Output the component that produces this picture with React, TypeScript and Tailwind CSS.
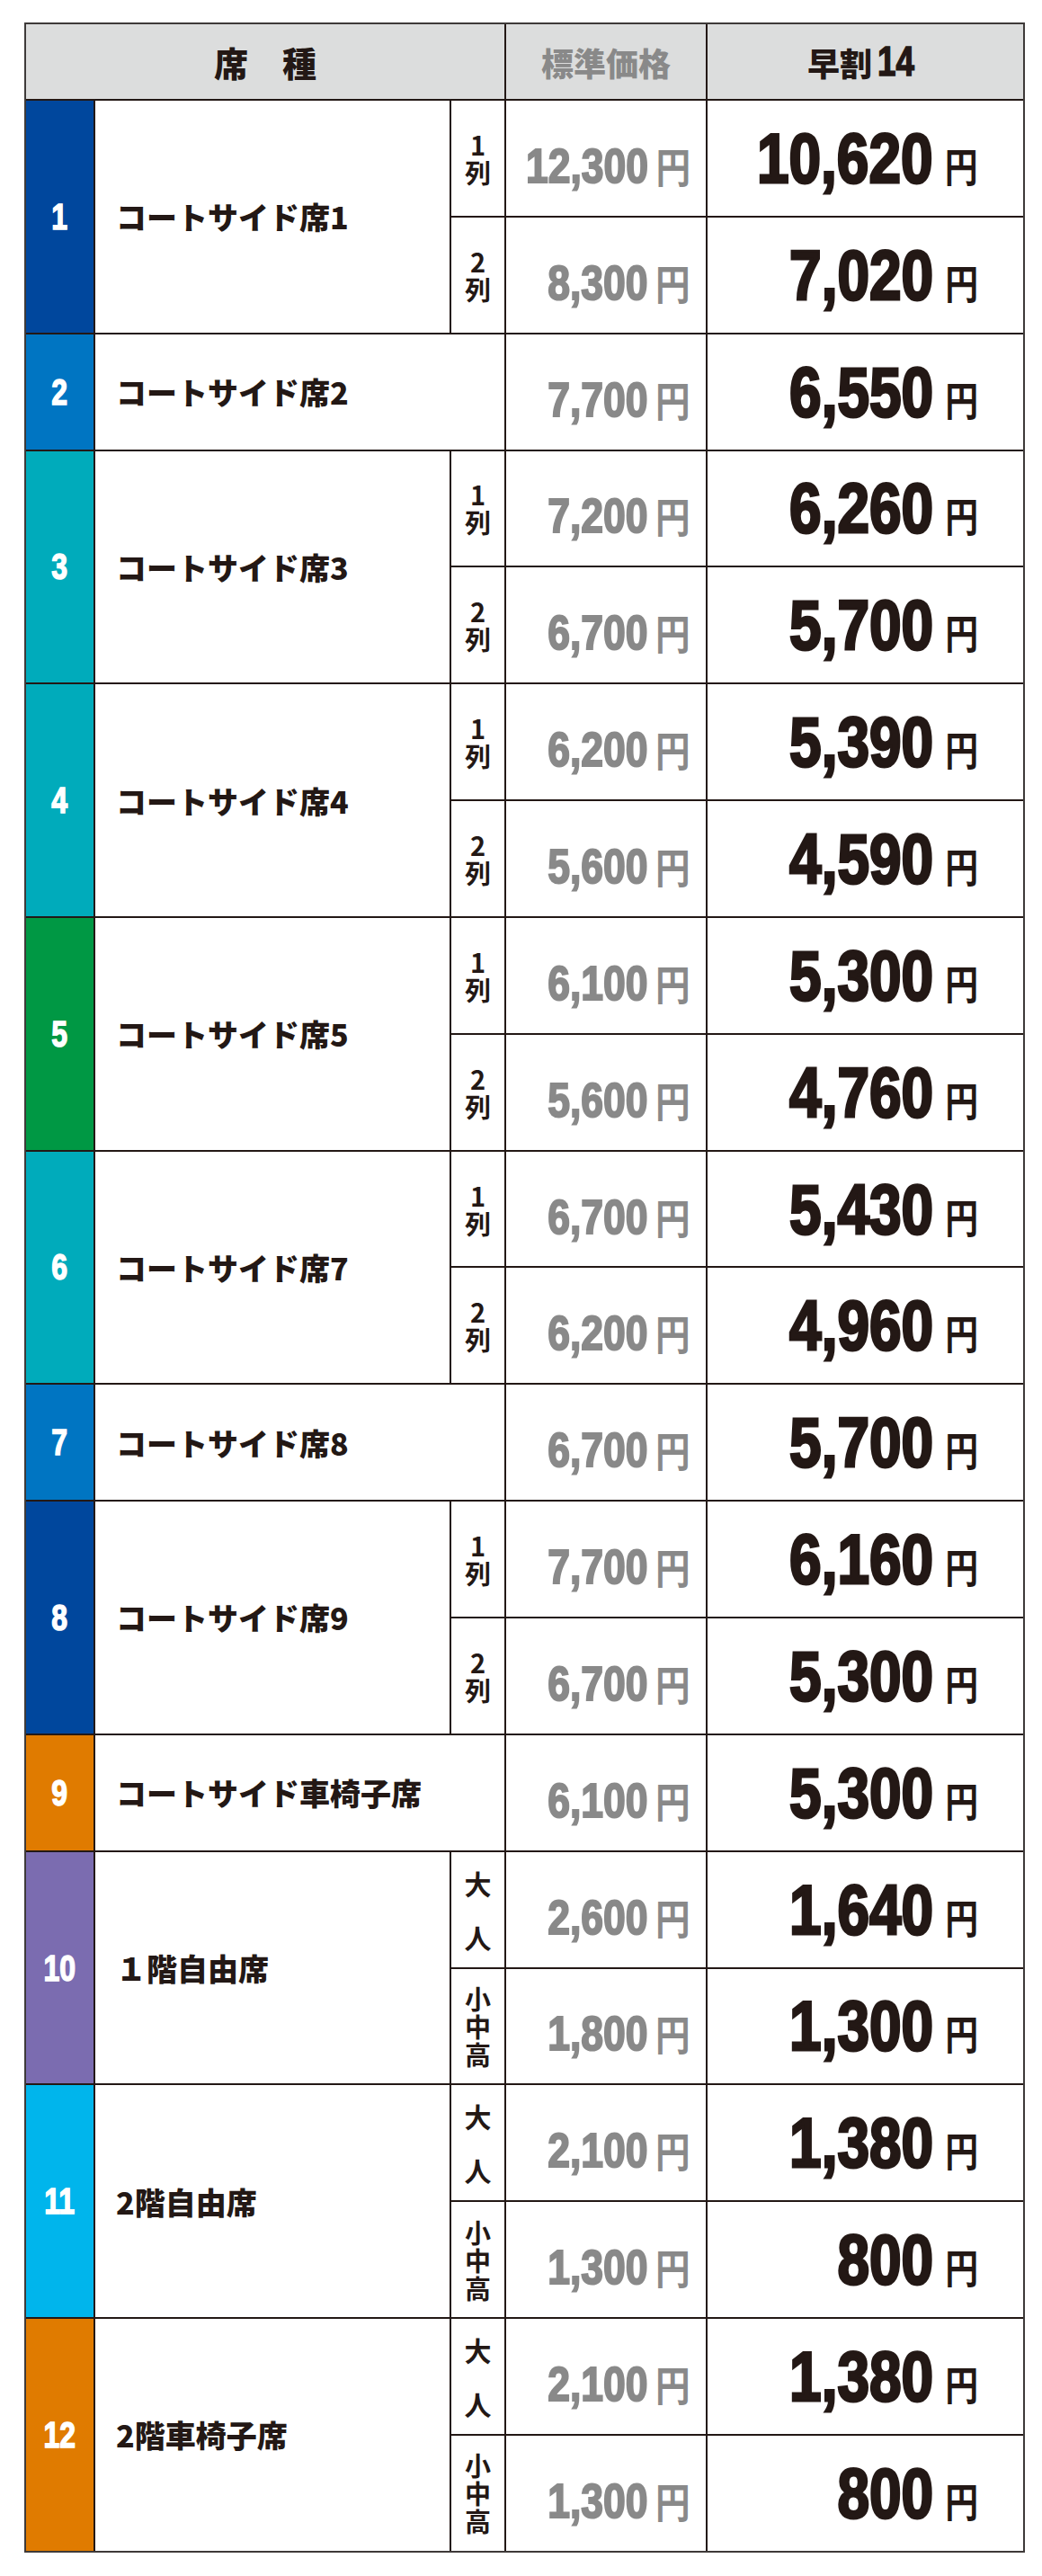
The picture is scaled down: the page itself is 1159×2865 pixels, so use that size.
import React from "react";

const jp = "font-['Noto_Sans_CJK_JP','Noto_Sans_CJK_SC',sans-serif]";
const num = "font-['Liberation_Sans','Arial',sans-serif]";

type Sub = { label: string; std: string; early: string };
type Seat = {
  n: string;
  color: string;
  name: string;
  subs?: Sub[];
  std?: string;
  early?: string;
};

const seats: Seat[] = [
  {
    n: "1",
    color: "bg-[#00479d]",
    name: "コートサイド席1",
    subs: [
      { label: "1列", std: "12,300", early: "10,620" },
      { label: "2列", std: "8,300", early: "7,020" },
    ],
  },
  { n: "2", color: "bg-[#0075c2]", name: "コートサイド席2", std: "7,700", early: "6,550" },
  {
    n: "3",
    color: "bg-[#00abbb]",
    name: "コートサイド席3",
    subs: [
      { label: "1列", std: "7,200", early: "6,260" },
      { label: "2列", std: "6,700", early: "5,700" },
    ],
  },
  {
    n: "4",
    color: "bg-[#00abbb]",
    name: "コートサイド席4",
    subs: [
      { label: "1列", std: "6,200", early: "5,390" },
      { label: "2列", std: "5,600", early: "4,590" },
    ],
  },
  {
    n: "5",
    color: "bg-[#009844]",
    name: "コートサイド席5",
    subs: [
      { label: "1列", std: "6,100", early: "5,300" },
      { label: "2列", std: "5,600", early: "4,760" },
    ],
  },
  {
    n: "6",
    color: "bg-[#00abbb]",
    name: "コートサイド席7",
    subs: [
      { label: "1列", std: "6,700", early: "5,430" },
      { label: "2列", std: "6,200", early: "4,960" },
    ],
  },
  { n: "7", color: "bg-[#0075c2]", name: "コートサイド席8", std: "6,700", early: "5,700" },
  {
    n: "8",
    color: "bg-[#00479d]",
    name: "コートサイド席9",
    subs: [
      { label: "1列", std: "7,700", early: "6,160" },
      { label: "2列", std: "6,700", early: "5,300" },
    ],
  },
  { n: "9", color: "bg-[#e07b00]", name: "コートサイド車椅子席", std: "6,100", early: "5,300" },
  {
    n: "10",
    color: "bg-[#7b6cb0]",
    name: "１階自由席",
    subs: [
      { label: "大人", std: "2,600", early: "1,640" },
      { label: "小中高", std: "1,800", early: "1,300" },
    ],
  },
  {
    n: "11",
    color: "bg-[#00b5ec]",
    name: "2階自由席",
    subs: [
      { label: "大人", std: "2,100", early: "1,380" },
      { label: "小中高", std: "1,300", early: "800" },
    ],
  },
  {
    n: "12",
    color: "bg-[#e07b00]",
    name: "2階車椅子席",
    subs: [
      { label: "大人", std: "2,100", early: "1,380" },
      { label: "小中高", std: "1,300", early: "800" },
    ],
  },
];

function StdPrice({ value }: { value: string }) {
  return (
    <div className="bg-white flex items-center justify-end pr-[17px] pt-[17px]">
      <span
        className={`inline-block whitespace-nowrap origin-right scale-x-[0.84] ${num} font-bold text-[53px] leading-none text-[#898989] [-webkit-text-stroke:2px_#898989]`}
      >
        {value}
        <span className={`${jp} font-bold text-[46px] ml-[10px] [-webkit-text-stroke:0px]`}>円</span>
      </span>
    </div>
  );
}

function EarlyPrice({ value }: { value: string }) {
  return (
    <div className="bg-white flex items-center justify-end pr-[50px]">
      <span
        className={`inline-block whitespace-nowrap origin-right scale-x-[0.82] ${num} font-bold text-[78px] leading-none text-[#231815] [-webkit-text-stroke:3px_#231815]`}
      >
        {value}
        <span className={`${jp} font-bold text-[45px] ml-[16px] [-webkit-text-stroke:0px]`}>円</span>
      </span>
    </div>
  );
}

function SubLabel({ label }: { label: string }) {
  // 大人 is spread over the cell, the others stack tight
  const spread = label === "大人";
  return (
    <div className="bg-white flex items-center justify-center">
      <span
        className={`whitespace-pre-line text-center ${jp} font-bold text-[#231815] ${
          spread ? "text-[30px] leading-[60px]" : "text-[29px] leading-[31px]"
        }`}
      >
        {label.split("").join("\n")}
      </span>
    </div>
  );
}

export default function App() {
  return (
    <div className="min-h-screen bg-white pl-[27px] pt-[25px] pb-[20px]">
      <div className="grid w-fit grid-cols-[75px_394px_59px_222px_351px] grid-rows-[83px_repeat(21,127.85px)] gap-[2px] border-2 border-[#3e3a39] bg-[#231815]">
        <div className={`col-span-3 bg-[#dcdddd] flex items-center justify-center ${jp} font-black text-[38px] text-[#231815] whitespace-nowrap`}>
          席　種
        </div>
        <div className={`bg-[#dcdddd] flex items-center justify-center ${jp} font-black text-[36px] text-[#898989] whitespace-nowrap`}>
          標準価格
        </div>
        <div className={`bg-[#dcdddd] flex items-center justify-center ${jp} font-black text-[36px] text-[#231815] whitespace-nowrap`}>
          早割
          <span className={`inline-block scale-x-[0.8] origin-left ${num} font-bold text-[46px] ml-[6px] [-webkit-text-stroke:1.5px_#231815]`}>
            14
          </span>
        </div>

        {seats.map((s) => (
          <React.Fragment key={s.n}>
            <div className={`${s.color} ${s.subs ? "row-span-2" : ""} flex items-center justify-center`}>
              <span
                className={`inline-block scale-x-[0.8] ${num} font-bold text-[40px] leading-none text-white [-webkit-text-stroke:1.5px_white]`}
              >
                {s.n}
              </span>
            </div>
            <div
              className={`bg-white ${s.subs ? "row-span-2" : "col-span-2"} flex items-center pl-[23px] ${jp} font-black text-[34px] text-[#231815] whitespace-nowrap`}
            >
              {s.name}
            </div>
            {s.subs ? (
              s.subs.map((sub, i) => (
                <React.Fragment key={i}>
                  <SubLabel label={sub.label} />
                  <StdPrice value={sub.std} />
                  <EarlyPrice value={sub.early} />
                </React.Fragment>
              ))
            ) : (
              <>
                <StdPrice value={s.std!} />
                <EarlyPrice value={s.early!} />
              </>
            )}
          </React.Fragment>
        ))}
      </div>
    </div>
  );
}
